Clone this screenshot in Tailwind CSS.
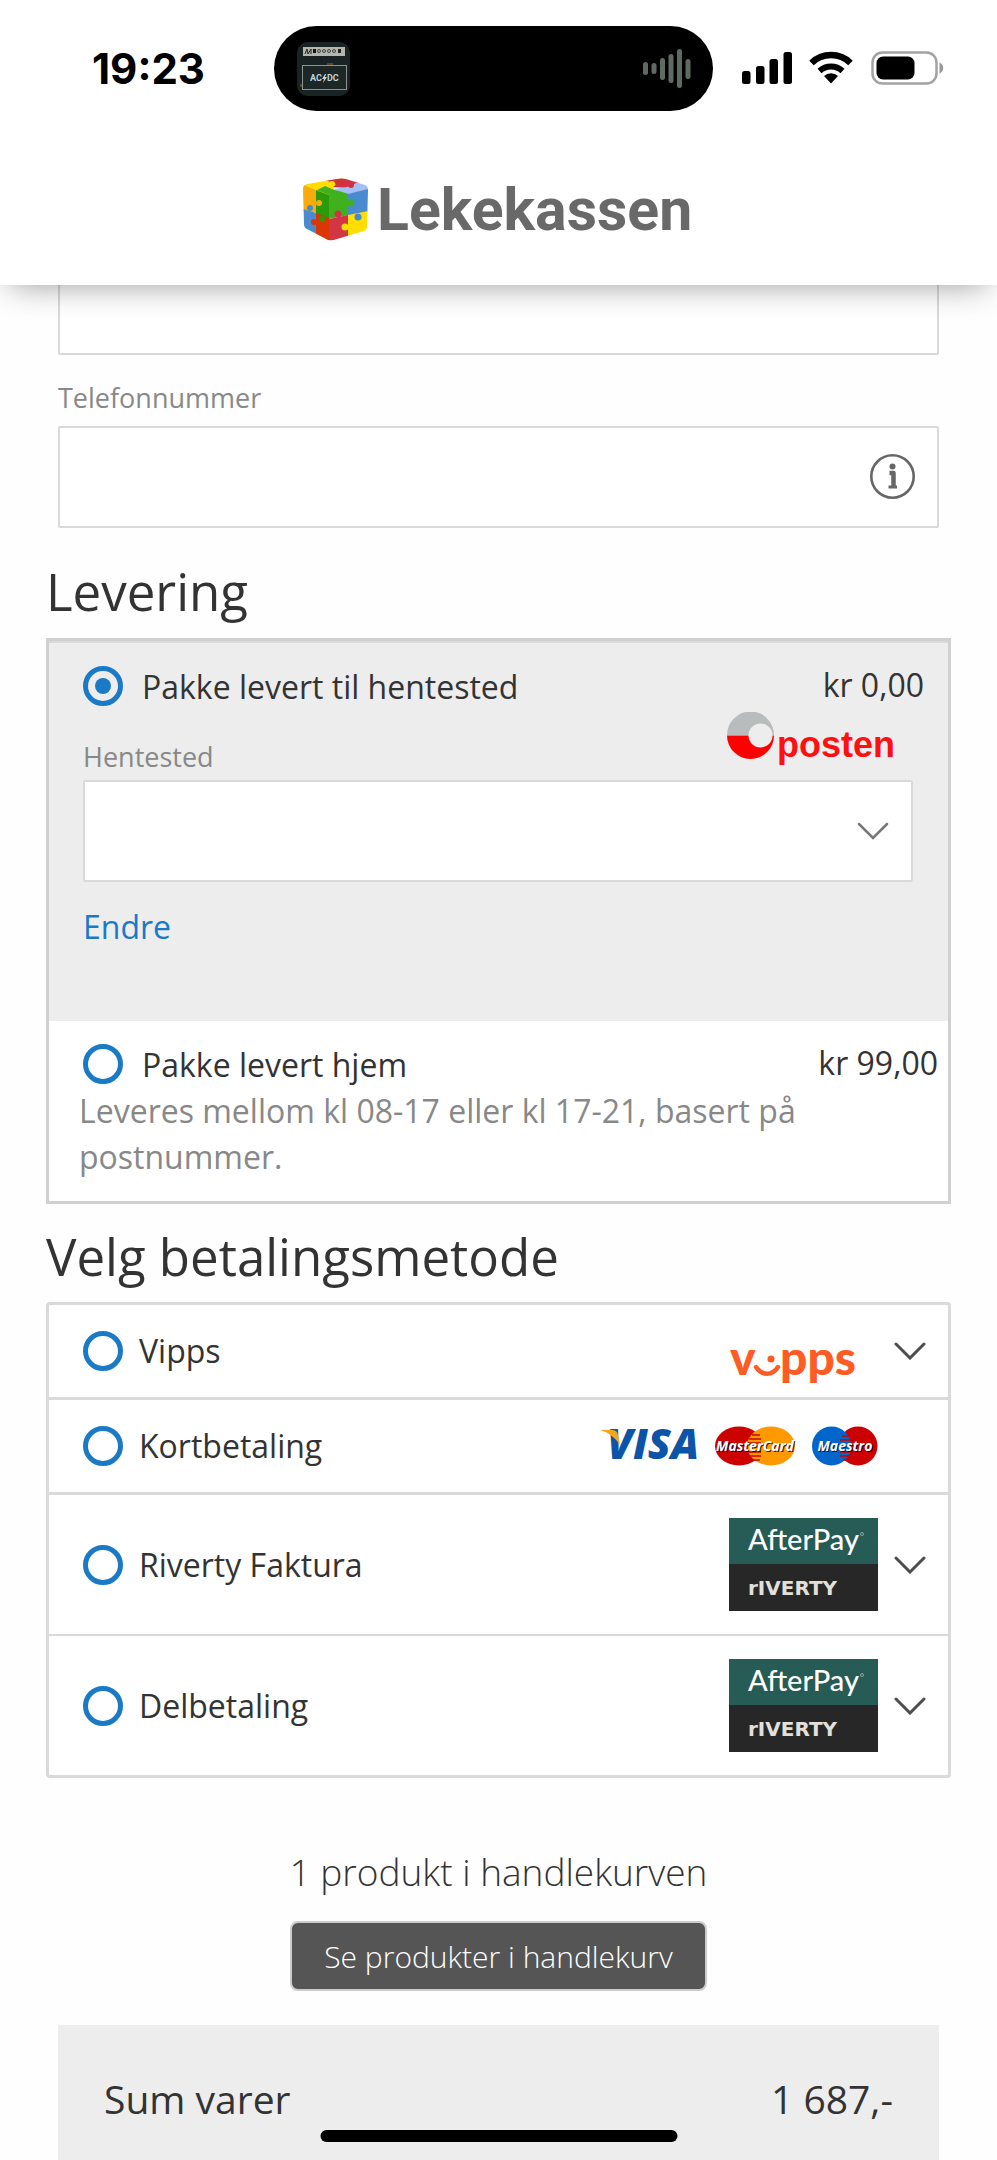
<!DOCTYPE html>
<html lang="no">

<head>
    <meta charset="UTF-8">
    <meta name="viewport" content="width=device-width, initial-scale=1.0">
    <title>Lekekassen</title>
    <script src="https://cdn.jsdelivr.net/npm/@tailwindcss/browser@4"></script>
</head>

<body class="min-h-screen flex flex-col bg-[#fefefe] text-[#333] font-['Open_Sans',sans-serif] text-[32px]">

    <header class="relative z-10 bg-white pb-11 shadow-[0_10px_30px_-10px_rgba(0,0,0,0.4)]">
        <div class="flex items-center pt-[26px] pl-[92px] pr-[53px]">
            <span class="w-[182px] font-['Inter',sans-serif] font-bold text-[42px] leading-none text-black">19:23</span>
            <div class="flex-1 h-[85px] rounded-full bg-black flex items-center justify-between pl-[23px] pr-[21px]">
                <svg width="53" height="54" viewBox="0 0 53 54">
                    <rect width="53" height="54" rx="11" fill="#1a2323" />
                    <rect x="6" y="5" width="42" height="9" fill="#b5b5ab" />
                    <path d="M8 12l2-5 1 5 3-5v5" stroke="#222" stroke-width="1" fill="none" />
                    <rect x="16" y="7" width="3" height="4" fill="#111" />
                    <g fill="none" stroke="#444" stroke-width="1">
                        <circle cx="22" cy="9" r="1.5" />
                        <circle cx="27" cy="9" r="1.5" />
                        <circle cx="32" cy="9" r="1.5" />
                        <circle cx="37" cy="9" r="1.5" />
                    </g>
                    <rect x="41" y="7" width="3" height="4" fill="#222" />
                    <path d="M30 22h6M4 42v3M49 36v3" stroke="#9a6a2d" stroke-width="1" />
                    <rect x="5.500" y="23.500" width="44" height="24" fill="#1d2725" stroke="#8a9290" stroke-width="1" />
                    <g font-family="Roboto" font-weight="700" font-size="9" fill="#c3d3d8">
                        <text x="13" y="39">AC</text>
                        <text x="30" y="39">DC</text>
                    </g>
                    <path d="M28 32l-3 5h2l-1 4 4-6h-2l1-3z" fill="#c3d3d8" />
                </svg>
                <svg width="49" height="40" viewBox="0 0 49 40" fill="#5f6b61">
                    <rect x="0" y="13" width="5" height="13" rx="2.500" />
                    <rect x="8.500" y="14" width="5" height="11" rx="2.500" />
                    <rect x="17" y="9" width="5" height="22" rx="2.500" />
                    <rect x="25.500" y="5" width="5" height="29" rx="2.500" />
                    <rect x="34" y="0" width="5" height="39" rx="2.500" />
                    <rect x="42.500" y="10" width="5" height="20" rx="2.500" />
                </svg>
            </div>
            <svg class="ml-[29px]" width="202" height="36" viewBox="0 0 202 36">
                <rect x="0" y="20" width="8.500" height="13" rx="2.500" />
                <rect x="14" y="15" width="8.500" height="18" rx="2.500" />
                <rect x="27.500" y="8" width="8.500" height="25" rx="2.500" />
                <rect x="41.500" y="1" width="8.500" height="32" rx="2.500" />
                <path d="M69.500 12a28 28 0 0 1 39 0" fill="none" stroke="#000" stroke-width="6.500" />
                <path d="M77.500 20a17 17 0 0 1 23 0" fill="none" stroke="#000" stroke-width="6" />
                <path d="M89 32.500l-7-7.500a10.500 10.500 0 0 1 14 0z" />
                <rect x="130.500" y="1.500" width="64" height="31" rx="10" fill="none" stroke="#a3a3a3" stroke-width="2.500" />
                <rect x="134.500" y="5.500" width="38" height="23" rx="6.500" />
                <path d="M197.500 11.500c5 2 5 9 0 11z" fill="#999" />
            </svg>
        </div>

        <a href="#" aria-label="Lekekassen" class="mt-[67px] flex justify-center">
            <svg class="overflow-visible" width="392" height="63" viewBox="0 0 392 63">
                <clipPath id="cube">
                    <path d="M4 6L34 1q5-1 9 0l19 6q3 1 3 5l-1 36q0 4-3 5l-27 8q-5 2-9 1L4 51q-3-1-3-5L0 11q0-4 4-5z" />
                </clipPath>
                <g clip-path="url(#cube)">
                    <path d="M0 0h40l-16 18L0 8z" fill="#fedd00" />
                    <path d="M22 2L42-2l16 6-14 6-14-1 3-3z" fill="#d0313e" />
                    <path d="M44 9l14-6 8 3v8l-20 4-15-7z" fill="#a4bff5" />
                    <path d="M0 7l13 5v23L0 32z" fill="#f9ab0b" />
                    <path d="M13 12l13 5v24l-13-5z" fill="#2c9b0b" />
                    <path d="M0 31l13 4v23L0 52z" fill="#4a8bd0" />
                    <path d="M13 35l13 5v26l-13-6z" fill="#dc3607" />
                    <path d="M14 12l8-4 7 3 17 5v21l-20 4V17z" fill="#40b01c" />
                    <path d="M45 16l20-5v23l-20 4z" fill="#4a8bd0" />
                    <path d="M26 41l19-4v26H26z" fill="#d23543" />
                    <path d="M45 37l20-4v26H45z" fill="#ffde00" />
                    <circle cx="35" cy="36" r="3.500" fill="#d23543" />
                    <circle cx="48" cy="25" r="3.500" fill="#40b01c" />
                    <circle cx="55" cy="39" r="3.500" fill="#4a8bd0" />
                    <circle cx="42" cy="49" r="3.500" fill="#ffde00" />
                    <circle cx="16" cy="25" r="3" fill="#f9ab0b" />
                    <circle cx="7" cy="30" r="3" fill="#4a8bd0" />
                    <circle cx="11" cy="44" r="3" fill="#dc3607" />
                    <circle cx="19" cy="41" r="3" fill="#2c9b0b" />
                    <circle cx="29" cy="6" r="3" fill="#fedd00" />
                    <circle cx="48" cy="7" r="3" fill="#d0313e" />
                </g>
                <text x="74" y="52" font-family="Roboto" font-weight="700" font-size="59" fill="#696969">Lekekassen</text>
            </svg>
        </a>
    </header>

    <main class="flex-1 flex flex-col px-[46px]">

        <!-- contact fields -->
        <div class="px-3">
            <input type="text" aria-label="Adresse" class="block w-full h-[102px] -mt-8 px-6 bg-white border-2 border-[#d9d9d9] rounded-xs">
            <label for="phone" class="block pt-3.5 text-[27px] leading-[57px] text-[#888]">Telefonnummer</label>
            <div class="relative">
                <input id="phone" type="tel" class="block w-full h-[102px] px-6 bg-white border-2 border-[#d9d9d9] rounded-xs">
                <button type="button" aria-label="Info" class="absolute right-6 top-7">
                    <svg width="45" height="45" viewBox="0 0 45 45" fill="none" stroke="#666">
                        <circle cx="22.500" cy="22.500" r="21.200" stroke-width="2.600" />
                        <circle cx="22.500" cy="12.500" r="3" fill="#666" stroke="none" />
                        <path d="M19.500 19h4v14" stroke-width="4.500" stroke-linejoin="round" />
                        <path d="M18.500 33h8.500" stroke-width="3" />
                    </svg>
                </button>
            </div>
        </div>

        <!-- delivery -->
        <h2 class="mt-[33px] mb-[17px] text-[51px] leading-[60px]">Levering</h2>
        <section class="border-3 border-[#d0d0d0] bg-white">
            <div class="pt-[23px] pl-[34px] pb-[71px] bg-[#ededed] border-t-2 border-[#dadada]">
                <div class="flex items-start pr-6">
                    <input type="radio" name="delivery" id="pickup" checked class="appearance-none shrink-0 grid place-items-center size-10 rounded-full border-5 border-[#1b7ac6] checked:before:content-[''] checked:before:size-4 checked:before:rounded-full checked:before:bg-[#1b7ac6]">
                    <label for="pickup" class="ml-[19px] flex-1 leading-[42px]">Pakke levert til hentested</label>
                    <span class="leading-[38px]">kr 0,00</span>
                </div>
                <div class="flex items-end justify-between pr-[53px] h-[72px]">
                    <label for="place" class="text-[27px] leading-[46px] text-[#888]">Hentested</label>
                    <svg class="self-start mt-1" width="168" height="54" viewBox="0 0 168 54">
                        <path d="M0 23a23.500 23.500 0 0 1 47 0z" fill="#b9bcbd" />
                        <path d="M0 23.500a23.500 23.500 0 0 0 47 0z" fill="#fe0000" />
                        <circle cx="33.500" cy="23.500" r="12" fill="#ededed" />
                        <text x="50" y="45" font-family="Liberation Sans" font-weight="700" font-size="36" fill="#fe1010">posten</text>
                    </svg>
                </div>
                <div class="relative mr-[35px]">
                    <select id="place" class="appearance-none block w-full h-[102px] px-6 bg-white border-2 border-[#d9d9d9] rounded-xs">
                        <option></option>
                    </select>
                    <svg class="absolute right-6 top-[42px] pointer-events-none" width="32" height="18" viewBox="0 0 32 18" fill="none" stroke="#777" stroke-width="2.500" stroke-linecap="round">
                        <path d="M2 2l14 14L30 2" />
                    </svg>
                </div>
                <a href="#" class="inline-block mt-[22px] leading-[46px] align-top text-[#1b7ac6]">Endre</a>
            </div>
            <div class="pt-[23px] pb-[21px]">
                <div class="flex items-start pl-[34px] pr-[10px]">
                    <input type="radio" name="delivery" id="home" class="appearance-none shrink-0 grid place-items-center size-10 rounded-full border-5 border-[#1b7ac6] checked:before:content-[''] checked:before:size-4 checked:before:rounded-full checked:before:bg-[#1b7ac6]">
                    <label for="home" class="ml-[19px] flex-1 leading-[42px]">Pakke levert hjem</label>
                    <span class="leading-[38px]">kr 99,00</span>
                </div>
                <p class="mt-[2px] pl-[30px] pr-6 leading-[46px] text-[#888]">Leveres mellom kl 08-17 eller kl 17-21, basert på postnummer.</p>
            </div>
        </section>

        <!-- payment -->
        <h2 class="mt-[22px] mb-4 text-[51px] leading-[60px]">Velg betalingsmetode</h2>
        <section class="border-3 border-[#dadada] rounded-sm bg-white" id="payment">
            <div class="flex items-center py-[26px] pl-[34px] pr-[22px] border-b-3 border-[#dadada]">
                <input type="radio" name="pay" id="vipps" class="appearance-none shrink-0 size-10 rounded-full border-5 border-[#1b7ac6]">
                <label for="vipps" class="ml-4 flex-1 leading-10">Vipps</label>
                <svg class="h-10 overflow-visible" width="128" height="40" viewBox="0 0 128 40">
                    <g font-family="Lato" font-weight="900" font-size="48" fill="#ff5b24">
                        <text x="0" y="44">v</text>
                        <text x="50" y="44">pps</text>
                    </g>
                    <circle cx="41" cy="28" r="3.500" fill="#ff5b24" />
                    <path d="M26 36c6 9 16 9 22 0" fill="none" stroke="#ff5b24" stroke-width="4.500" stroke-linecap="round" />
                </svg>
                <svg class="ml-9" width="32" height="18" viewBox="0 0 32 18" fill="none" stroke="#4d4d4d" stroke-width="3" stroke-linecap="round">
                    <path d="M2 2l14 14L30 2" />
                </svg>
            </div>
            <div class="flex items-center py-[26px] pl-[34px] pr-[70px] border-b-3 border-[#dadada]">
                <input type="radio" name="pay" id="card" class="appearance-none shrink-0 size-10 rounded-full border-5 border-[#1b7ac6]">
                <label for="card" class="ml-4 flex-1 leading-10">Kortbetaling</label>
                <svg class="overflow-visible" width="104" height="40" viewBox="0 0 104 40">
                    <text x="7" y="33" font-family="Open Sans" font-weight="800" font-style="italic" font-size="42" fill="#0d54a8">VISA</text>
                    <path d="M0 4h12q5 0 6 5l2 10Q12 7 0 4z" fill="#f9a51a" />
                </svg>
                <svg class="ml-[11px]" width="81" height="40" viewBox="0 0 81 40">
                    <ellipse cx="24" cy="20" rx="24" ry="19.500" fill="#c00" />
                    <ellipse cx="56" cy="20" rx="24" ry="19.500" fill="#f90" />
                    <path d="M37 9h8M34 13h12M33 17h13M33 26h13M34 30h12M37 34h8" stroke="#c00" stroke-width="1.500" />
                    <text x="41" y="26" text-anchor="middle" font-family="Open Sans" font-weight="700" font-style="italic" font-size="14" fill="#003" opacity="0.8">MasterCard</text>
                    <text x="40" y="25" text-anchor="middle" font-family="Open Sans" font-weight="700" font-style="italic" font-size="14" fill="#fff">MasterCard</text>
                </svg>
                <svg class="ml-4" width="66" height="40" viewBox="0 0 66 40">
                    <circle cx="46" cy="20" r="19.500" fill="#c00" />
                    <circle cx="19.500" cy="20" r="19.500" fill="#06c" />
                    <path d="M30 10h7M28 14h10M28 26h10M28 30h9M31 34h4" stroke="#c00" stroke-width="1.500" />
                    <text x="34" y="26" text-anchor="middle" font-family="Open Sans" font-weight="700" font-style="italic" font-size="14" fill="#003" opacity="0.8">Maestro</text>
                    <text x="33" y="25" text-anchor="middle" font-family="Open Sans" font-weight="700" font-style="italic" font-size="14" fill="#fff">Maestro</text>
                </svg>
            </div>
            <div class="flex items-center py-[23px] pl-[34px] pr-[22px] border-b-2 border-[#dadada]">
                <input type="radio" name="pay" id="invoice" class="appearance-none shrink-0 size-10 rounded-full border-5 border-[#1b7ac6]">
                <label for="invoice" class="ml-4 flex-1 leading-10">Riverty Faktura</label>
                <svg width="149" height="93" viewBox="0 0 149 93">
                    <rect width="149" height="93" fill="#272727" />
                    <rect width="149" height="46" fill="#265b56" />
                    <text x="19" y="32" font-family="Lato" font-weight="500" font-size="29" fill="#fff">AfterPay</text>
                    <circle cx="133" cy="16" r="1.500" fill="none" stroke="#9db9b6" stroke-width="0.800" />
                    <text x="19" y="77" font-family="DejaVu Sans" font-weight="700" font-size="20" fill="#e3e0db">rIVERTY</text>
                </svg>
                <svg class="ml-4" width="32" height="18" viewBox="0 0 32 18" fill="none" stroke="#4d4d4d" stroke-width="3" stroke-linecap="round">
                    <path d="M2 2l14 14L30 2" />
                </svg>
            </div>
            <div class="flex items-center py-[23px] pl-[34px] pr-[22px]">
                <input type="radio" name="pay" id="parts" class="appearance-none shrink-0 size-10 rounded-full border-5 border-[#1b7ac6]">
                <label for="parts" class="ml-4 flex-1 leading-10">Delbetaling</label>
                <svg width="149" height="93" viewBox="0 0 149 93">
                    <rect width="149" height="93" fill="#272727" />
                    <rect width="149" height="46" fill="#265b56" />
                    <text x="19" y="32" font-family="Lato" font-weight="500" font-size="29" fill="#fff">AfterPay</text>
                    <circle cx="133" cy="16" r="1.500" fill="none" stroke="#9db9b6" stroke-width="0.800" />
                    <text x="19" y="77" font-family="DejaVu Sans" font-weight="700" font-size="20" fill="#e3e0db">rIVERTY</text>
                </svg>
                <svg class="ml-4" width="32" height="18" viewBox="0 0 32 18" fill="none" stroke="#4d4d4d" stroke-width="3" stroke-linecap="round">
                    <path d="M2 2l14 14L30 2" />
                </svg>
            </div>
        </section>

        <!-- cart -->
        <p class="mt-[69px] text-center font-light text-[37px] leading-[50px]">1 produkt i handlekurven</p>
        <button type="button" class="mt-6 mx-auto h-[70px] px-8 rounded-lg border-2 border-[#ccc] bg-[#555] text-white font-light text-[30px]">Se produkter i handlekurv</button>
        <div class="flex-1 mt-[34px] mx-3 px-[46px] pt-[49px] bg-[#ededed] flex justify-between text-[39px] leading-[50px]">
            <span>Sum varer</span>
            <span>1 687,-</span>
        </div>
    </main>

    <div class="fixed bottom-[18px] left-1/2 -translate-x-1/2 w-[357px] h-3 rounded-full bg-black"></div>

</body>

</html>
